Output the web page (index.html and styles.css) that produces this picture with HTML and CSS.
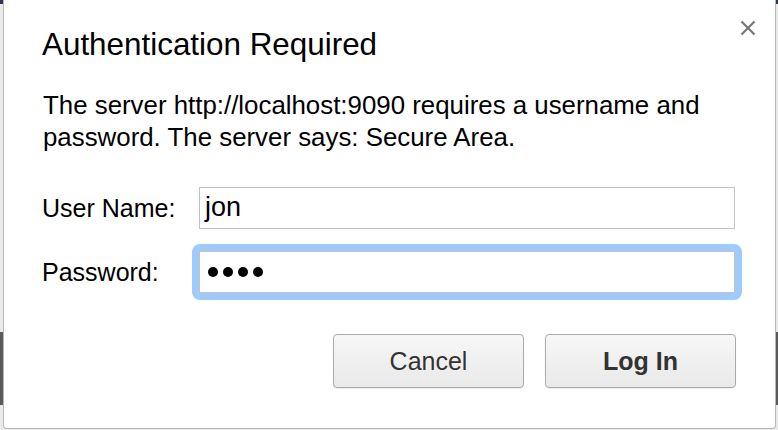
FILE: index.html
```html
<!DOCTYPE html>
<html>
<head>
<meta charset="utf-8">
<link rel="stylesheet" href="styles.css">
</head>
<body>
<div class="dialog">
  <button class="close" aria-label="Close">
    <svg width="16" height="16" viewBox="0 0 16 16"><path d="M1.5 1.5L14.5 14.5M14.5 1.5L1.5 14.5" stroke="#777" stroke-width="2.2"/></svg>
  </button>
  <h1 class="title">Authentication Required</h1>
  <p class="desc">The server http://localhost:9090 requires a username and password. The server says: Secure Area.</p>
  <div class="form">
    <label class="label">User Name:</label>
    <div class="input">jon</div>
    <label class="label">Password:</label>
    <div class="ring"><div class="input dots"><span class="dot"></span><span class="dot"></span><span class="dot"></span><span class="dot"></span></div></div>
  </div>
  <div class="buttons">
    <button class="btn">Cancel</button>
    <button class="btn primary">Log In</button>
  </div>
</div>
</body>
</html>
```

FILE: styles.css
```css
html, body {
  margin: 0;
  height: 100%;
}
body {
  background: linear-gradient(to bottom, #2e3550 0, #2e3550 4px, #e9e9e9 4px, #e9e9e9 332px, #5a5a5a 332px, #5a5a5a 405px, #e9e9e9 405px);
  font-family: "Liberation Sans", Arial, sans-serif;
  color: #000;
  overflow: hidden;
}
.dialog {
  position: relative;
  box-sizing: border-box;
  margin-left: 3px;
  width: 773px;
  height: 429px;
  background: #fff;
  border: 1px solid #b8b8b8;
  border-top: none;
  border-radius: 0 0 4px 4px;
  padding: 27px 40px 0 38px;
}
.close {
  position: absolute;
  top: 20px;
  right: 19px;
  border: none;
  background: none;
  padding: 0;
  width: 16px;
  height: 16px;
  display: flex;
}
.title {
  margin: 0;
  font-weight: normal;
  font-size: 31.4px;
  line-height: 36px;
}
.desc {
  margin: 26px 0 0 1px;
  font-size: 25.85px;
  line-height: 32px;
}
.form {
  margin-top: 34px;
  display: grid;
  grid-template-columns: 157px 1fr;
  row-gap: 22px;
  align-items: center;
}
.label {
  font-size: 25px;
  line-height: 30px;
}
.ring {
  border: 7px solid #9ecbf9;
  border-radius: 8px;
  margin: -7px;
}
.input {
  box-sizing: border-box;
  height: 42px;
  border: 1px solid #c3c3c3;
  background: #fff;
  font-size: 27px;
  line-height: 38px;
  padding: 0 5px;
}
.dots {
  display: flex;
  align-items: center;
  gap: 5px;
  padding-left: 8px;
}
.dot {
  width: 10px;
  height: 10px;
  border-radius: 50%;
  background: #000;
}
.buttons {
  margin-top: 41px;
  display: flex;
  justify-content: flex-end;
  gap: 21px;
  margin-right: -1px;
}
.btn {
  width: 191px;
  height: 54px;
  border: 1px solid #a9a9a9;
  border-radius: 4px;
  background: linear-gradient(to bottom, #f7f7f7, #e9e9e9);
  box-shadow: 0 1px 1px rgba(0,0,0,0.08);
  font-family: "Liberation Sans", Arial, sans-serif;
  font-size: 25px;
  color: #333;
  padding: 0;
}
.btn.primary {
  font-weight: bold;
}
```
